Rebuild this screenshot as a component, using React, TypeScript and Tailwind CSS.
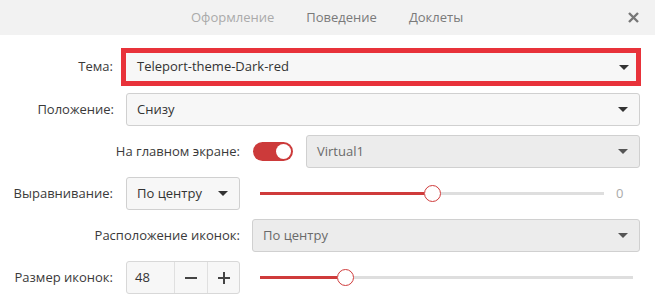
import * as React from "react";

function Caret({ className = "" }: { className?: string }) {
  return (
    <svg width="10" height="5" viewBox="0 0 10 5" className={className}>
      <path d="M0 0h10L5 5z" fill="currentColor" />
    </svg>
  );
}

function Select({
  value,
  width,
  disabled,
}: {
  value: string;
  width: string;
  disabled?: boolean;
}) {
  return (
    <div
      className={`${width} h-[33px] flex items-center justify-between pl-[10px] pr-[11px] rounded-[3px] border border-[#d0d0d0] ${
        disabled ? "bg-[#ececec] text-[#6a6a6a]" : "bg-[#f7f7f7] text-[#333]"
      }`}
    >
      <span>{value}</span>
      <Caret className={disabled ? "text-[#555]" : "text-[#333]"} />
    </div>
  );
}

function Slider({ filled, width }: { filled: string; width: string }) {
  return (
    <div className={`${width} flex items-center`}>
      <div className={`${filled} h-[3px] bg-[#cf3b3b]`} />
      <div className="w-[17px] h-[17px] rounded-full border-[1.5px] border-[#cf3b3b] bg-white shrink-0" />
      <div className="flex-1 h-[3px] bg-[#dedede]" />
    </div>
  );
}

function Label({ width, children }: { width: string; children: React.ReactNode }) {
  return <div className={`${width} text-right text-[#3a3a3a] shrink-0`}>{children}</div>;
}

export default function App() {
  return (
    <div
      className="w-[655px] h-[308px] bg-white text-[13px] overflow-hidden"
      style={{ fontFamily: '"Open Sans", "Noto Sans", sans-serif' }}
    >
      <header className="h-[35px] bg-[#f2f2f2] flex items-center text-[13px]">
        <nav className="flex ml-[175px]">
          <span className="px-[16px] text-[#aaa]">Оформление</span>
          <span className="px-[16px] text-[#7a7a7a]">Поведение</span>
          <span className="px-[16px] text-[#7a7a7a]">Доклеты</span>
        </nav>
        <button className="ml-auto mr-[16px] text-[#777]">
          <svg width="11" height="11" viewBox="0 0 11 11">
            <path d="M1 1l9 9M10 1l-9 9" stroke="currentColor" strokeWidth="2.4" />
          </svg>
        </button>
      </header>

      <main className="pt-[13px] flex flex-col">
        <div className="flex items-center h-[38px]">
          <Label width="w-[113px]">Тема:</Label>
          <div className="ml-[8px] w-[520px] h-[38px] border-[5px] border-[#e8323a] bg-[#f7f7f7] flex items-center justify-between pl-[11px] pr-[7px] text-[#333]">
            <span>Teleport-theme-Dark-red</span>
            <Caret className="text-[#333]" />
          </div>
        </div>

        <div className="flex items-center mt-[7px]">
          <Label width="w-[114px]">Положение:</Label>
          <div className="ml-[12px]">
            <Select value="Снизу" width="w-[514px]" />
          </div>
        </div>

        <div className="flex items-center mt-[9px]">
          <Label width="w-[240px]">На главном экране:</Label>
          <div className="ml-[13px] w-[40px] h-[19px] rounded-full bg-[#cc3a3a] flex items-center justify-end pr-[2px] shrink-0">
            <div className="w-[15px] h-[15px] rounded-full bg-white" />
          </div>
          <div className="ml-[13px]">
            <Select value="Virtual1" width="w-[334px]" disabled />
          </div>
        </div>

        <div className="flex items-center mt-[9px]">
          <Label width="w-[113px]">Выравнивание:</Label>
          <div className="ml-[13px]">
            <Select value="По центру" width="w-[114px]" />
          </div>
          <div className="ml-[20px]">
            <Slider filled="w-[164px]" width="w-[344px]" />
          </div>
          <span className="ml-[12px] text-[#aaa]">0</span>
        </div>

        <div className="flex items-center mt-[9px]">
          <Label width="w-[240px]">Расположение иконок:</Label>
          <div className="ml-[12px]">
            <Select value="По центру" width="w-[388px]" disabled />
          </div>
        </div>

        <div className="flex items-center mt-[9px]">
          <Label width="w-[113px]">Размер иконок:</Label>
          <div className="ml-[13px] w-[114px] h-[33px] flex rounded-[3px] border border-[#d8d8d8] bg-[#f7f7f7] text-[#333]">
            <span className="w-[47px] flex items-center pl-[8px]">48</span>
            <span className="w-[33px] flex items-center justify-center border-l border-[#e0e0e0]">
              <svg width="12" height="2" viewBox="0 0 12 2">
                <path d="M0 1h12" stroke="#444" strokeWidth="2" />
              </svg>
            </span>
            <span className="flex-1 flex items-center justify-center border-l border-[#e0e0e0]">
              <svg width="12" height="12" viewBox="0 0 12 12">
                <path d="M0 6h12M6 0v12" stroke="#444" strokeWidth="2" />
              </svg>
            </span>
          </div>
          <div className="ml-[20px]">
            <Slider filled="w-[77px]" width="w-[373px]" />
          </div>
        </div>
      </main>
    </div>
  );
}
